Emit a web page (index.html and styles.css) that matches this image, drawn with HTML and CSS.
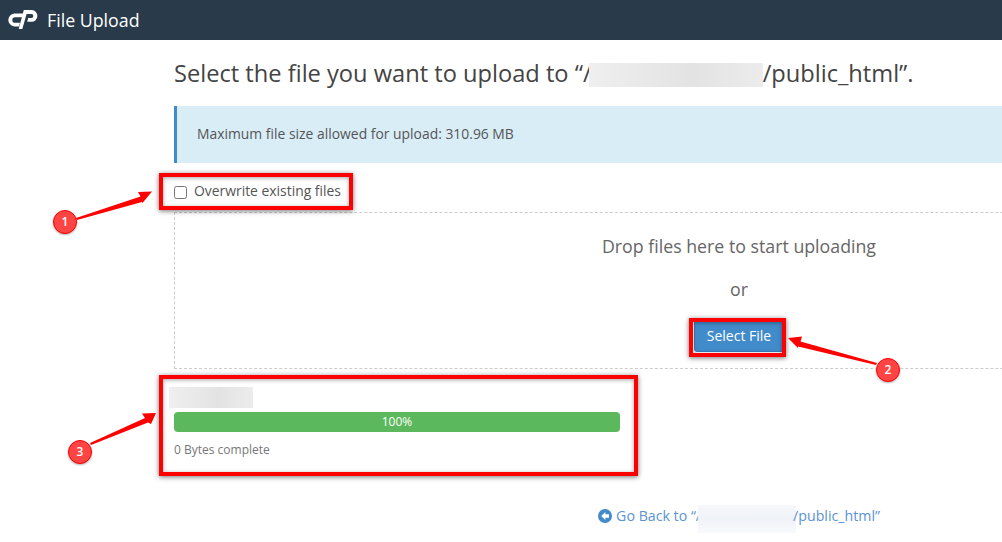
FILE: index.html
```html
<!DOCTYPE html>
<html lang="en">
<head>
  <meta charset="UTF-8" />
  <meta name="viewport" content="width=device-width, initial-scale=1.0" />
  <title>File Upload</title>
  <link rel="stylesheet" href="styles.css">
</head>
<body>
  <header class="topbar">
    <svg class="logo" viewBox="0 0 30 20" aria-hidden="true">
      <path d="M15.5 3.6H7a6.4 6.4 0 0 0-.6 12.8H11l1-3.6H7a2.8 2.8 0 0 1 .2-5.6h7.3z" fill="#fff"/>
      <path d="M10.7 19h3.6L18.6 4h4.6a2 2 0 0 1 .2 4h-3.2l-1 3.7h4.2a5.8 5.8 0 0 0 .4-11.6h-8z" fill="#fff"/>
    </svg>
    <span class="topbar-title">File Upload</span>
  </header>

  <main class="content">
    <h1 class="page-title">Select the file you want to upload to “/<span class="blur blur-title"></span>/public_html”.</h1>

    <div class="alert">Maximum file size allowed for upload: 310.96 MB</div>

    <label class="overwrite">
      <input type="checkbox" />
      Overwrite existing files
    </label>

    <div class="dropzone">
      <p class="drop-text">Drop files here to start uploading</p>
      <p class="drop-or">or</p>
      <button class="select-btn">Select File</button>
    </div>

    <div class="upload-item">
      <div class="blur blur-name"></div>
      <div class="progress">100%</div>
      <div class="progress-info">0 Bytes complete</div>
    </div>

    <p class="go-back">
      <svg class="back-icon" viewBox="0 0 14 14" aria-hidden="true">
        <circle cx="7" cy="7" r="7" fill="#428bca"/>
        <path d="M7.4 3 3.2 7l4.2 4V8.8h3.6V5.2H7.4z" fill="#fff"/>
      </svg>
      <a href="#">Go Back to “/<span class="blur blur-link"></span>/public_html”</a>
    </p>
  </main>

  <!-- screenshot annotations -->
  <div class="mark-box box-1"></div>
  <div class="mark-box box-2"></div>
  <div class="mark-box box-3"></div>

  <svg class="arrows" viewBox="0 0 1002 542" aria-hidden="true">
    <path d="M152 191.5 L138 192 L140.5 196.5 L76 218 L77 220 L142 202 L142.5 203z" class="arrow"/>
    <path d="M788 338 L802 336.5 L800.5 341.5 L877 363 L876 365 L798 346.5 L798 348z" class="arrow"/>
    <path d="M156 413 L142 413.5 L145 418 L90 443 L91 445 L148 422.5 L151 424z" class="arrow"/>
  </svg>

  <div class="marker marker-1">1</div>
  <div class="marker marker-2">2</div>
  <div class="marker marker-3">3</div>
</body>
</html>
```

FILE: styles.css
```css
* {
  box-sizing: border-box;
}

html, body {
  height: 100%;
}

body {
  margin: 0;
  position: relative;
  overflow: hidden;
  background: #fff;
  color: #555;
  font-family: 'Open Sans', sans-serif;
}

.topbar {
  height: 40px;
  background: #293a4a;
  display: flex;
  align-items: center;
  padding-left: 8px;
  color: #fff;
}

.logo {
  width: 30px;
  height: 20px;
  margin-right: 9px;
}

.topbar-title {
  font-size: 17.8px;
  line-height: 38px;
}

.content {
  width: 1130px;
  margin-left: 174px;
}

.page-title {
  margin: 17px 0 17px;
  font-size: 23.65px;
  font-weight: 400;
  line-height: 32px;
  color: #444;
  white-space: nowrap;
}

.blur {
  background: linear-gradient(90deg, #efefef, #e3e3e3 60%, #ececec);
}

.blur-title {
  display: inline-block;
  width: 174px;
  height: 24px;
  margin-left: -3px;
  vertical-align: -5px;
}

.alert {
  height: 57px;
  padding-left: 20px;
  border-left: 3px solid #428bca;
  background: #d9edf7;
  font-size: 13.9px;
  line-height: 55px;
}

.overwrite {
  display: flex;
  align-items: center;
  height: 20px;
  margin-top: 17px;
  font-size: 13.9px;
}

.overwrite input {
  width: 13px;
  height: 13px;
  margin: 5px 7px 0 0;
}

.dropzone {
  height: 157px;
  margin-top: 12px;
  border: 1px dashed #ccc;
  text-align: center;
}

.drop-text {
  margin: 21px 0 0;
  font-size: 17.75px;
  line-height: 24px;
  color: #666;
}

.drop-or {
  margin: 19px 0 0;
  font-size: 17.75px;
  line-height: 24px;
  color: #666;
}

.select-btn {
  display: block;
  width: 90px;
  height: 32px;
  margin: 19px auto 0;
  padding: 0 0 2px;
  border: 1px solid #357ebd;
  border-radius: 3px;
  background: #428bca;
  color: #fff;
  font-family: inherit;
  font-size: 14px;
}

.upload-item {
  width: 446px;
  margin-top: 18px;
}

.blur-name {
  width: 84px;
  height: 21px;
  margin-left: -5px;
}

.progress {
  height: 20px;
  margin-top: 4px;
  border-radius: 4px;
  background: #5cb85c;
  color: #fff;
  font-size: 12px;
  line-height: 20px;
  text-align: center;
}

.progress-info {
  margin-top: 10px;
  font-size: 12px;
  line-height: 16px;
  color: #777;
}

.go-back {
  margin: 49px 0 0;
  display: flex;
  justify-content: center;
  align-items: center;
  font-size: 14.2px;
  line-height: 18px;
  white-space: nowrap;
}

.go-back a {
  color: #5b93d3;
  text-decoration: none;
}

.back-icon {
  width: 14px;
  height: 14px;
  margin-right: 4px;
}

.blur-link {
  display: inline-block;
  width: 98px;
  height: 28px;
  margin: -10px -3px;
  background: linear-gradient(180deg, #f7f8fb, #eff2f7 50%, #f9fafc);
  vertical-align: -2px;
}

/* annotations on top of the screenshot */
.mark-box {
  position: absolute;
  border: 4px solid #f00;
  box-shadow: 0 1px 5px rgba(0, 0, 0, 0.55), inset 0 1px 4px rgba(0, 0, 0, 0.35);
}

.box-1 {
  left: 159px;
  top: 173px;
  width: 194px;
  height: 37px;
}

.box-2 {
  left: 689px;
  top: 318px;
  width: 97px;
  height: 39px;
}

.box-3 {
  left: 159px;
  top: 375px;
  width: 479px;
  height: 101px;
}

.arrows {
  position: absolute;
  left: 0;
  top: 0;
  width: 1002px;
  height: 542px;
}

.arrow {
  fill: #f00;
}

.marker {
  position: absolute;
  width: 24px;
  height: 24px;
  border: 1px solid #f00;
  border-radius: 50%;
  background: #f44;
  color: #fff;
  font-size: 12px;
  font-weight: 600;
  line-height: 22px;
  text-align: center;
  box-shadow: 0 1px 2px rgba(0, 0, 0, 0.3);
}

.marker-1 {
  left: 53px;
  top: 210px;
}

.marker-2 {
  left: 876px;
  top: 358px;
}

.marker-3 {
  left: 68px;
  top: 440px;
}
```
